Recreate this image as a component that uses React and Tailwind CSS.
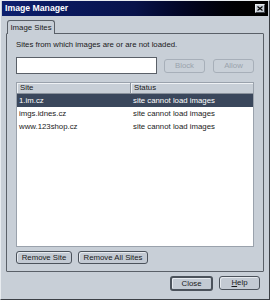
import React from 'react';

const font = { fontFamily: '"Liberation Sans", Arial, sans-serif' };

function Btn({ children, disabled, className = '' }) {
  return (
    <div
      className={
        'flex items-center justify-center whitespace-nowrap rounded-[3px] border text-[7.8px] leading-none ' +
        (disabled
          ? 'border-[#a7afb9] bg-[#c9d0d8] text-[#9aa3ad] '
          : 'border-[#4b525b] bg-[#c3cad3] text-[#1a1a1a] shadow-[inset_1px_1px_0_#e6eaef] ') +
        className
      }
    >
      {children}
    </div>
  );
}

const rows = [
  { site: '1.im.cz', status: 'site cannot load images', selected: true },
  { site: 'imgs.idnes.cz', status: 'site cannot load images' },
  { site: 'www.123shop.cz', status: 'site cannot load images' },
];

export default function App() {
  return (
    <div
      className="w-[270px] h-[300px] bg-[#c8cfd7] border border-[#e8ecf0] border-r-[#3c4046] border-b-[#3c4046] flex flex-col overflow-hidden"
      style={font}
    >
      {/* title bar */}
      <div className="h-[15px] mx-[1px] flex items-center justify-between pl-[3px] pr-[3px] bg-gradient-to-r from-[#0c1f6e] via-[#08134a] to-[#000000]">
        <span className="text-white font-bold text-[8.7px] leading-none">Image Manager</span>
        <div className="w-[10px] h-[9px] bg-[#c8cfd7] border border-[#e8ecf0] border-r-[#40454c] border-b-[#40454c] flex items-center justify-center">
          <svg width="6" height="5" viewBox="0 0 6 5">
            <path d="M0.5 0.5 L5.5 4.5 M5.5 0.5 L0.5 4.5" stroke="#000" strokeWidth="1.2" />
          </svg>
        </div>
      </div>

      <div className="flex-1 flex flex-col px-[5px] pt-[4px]">
        {/* tab */}
        <div className="flex">
          <div className="ml-[1px] h-[14px] w-[48px] flex items-center justify-center border border-b-0 border-[#5a6068] rounded-t-[3px] bg-[#c8cfd7] text-[7.8px] leading-none text-[#1a1a1a] relative z-10 -mb-px">
            Image Sites
          </div>
        </div>

        {/* panel */}
        <div className="h-[239px] border border-[#5a6068] rounded-[1px] flex flex-col px-[9px] text-[7.8px] leading-none text-[#1a1a1a]">
          <div className="mt-[7px] h-[8px] whitespace-nowrap">
            Sites from which images are or are not loaded.
          </div>

          <div className="mt-[8px] flex items-center">
            <div className="w-[141px] h-[17px] bg-white border border-[#5a6068]" />
            <Btn disabled className="ml-[7px] w-[41px] h-[14px]">Block</Btn>
            <Btn disabled className="ml-[8px] w-[41px] h-[14px]">Allow</Btn>
          </div>

          <div className="mt-[8px] w-[238px] h-[165px] bg-white border border-[#9aa2ac] flex flex-col">
            <div className="flex h-[11px] bg-[#c8cfd7] border-b border-[#8a929c]">
              <div className="w-[114px] pl-[3px] flex items-center border-r border-[#8a929c] shadow-[inset_1px_1px_0_#eef1f4]">
                Site
              </div>
              <div className="flex-1 pl-[3px] flex items-center shadow-[inset_1px_1px_0_#eef1f4]">
                Status
              </div>
            </div>
            {rows.map((r) => (
              <div
                key={r.site}
                className={
                  'flex h-[13px] items-center whitespace-nowrap ' +
                  (r.selected ? 'bg-[#3a475c] text-white' : '')
                }
              >
                <div className="w-[115px] pl-[2px]">{r.site}</div>
                <div className="flex-1 pl-[1px]">{r.status}</div>
              </div>
            ))}
          </div>

          <div className="mt-[4px] flex">
            <Btn className="w-[56px] h-[13px]">Remove Site</Btn>
            <Btn className="ml-[6px] w-[70px] h-[13px]">Remove All Sites</Btn>
          </div>
        </div>

        {/* bottom buttons */}
        <div className="mt-[4px] flex justify-end pr-[4px]">
          <Btn className="w-[43px] h-[15px] border-[2px] border-[#3c4248]">Close</Btn>
          <Btn className="ml-[6px] w-[41px] h-[14px]">
            <span>
              <span className="underline">H</span>elp
            </span>
          </Btn>
        </div>
      </div>
    </div>
  );
}
